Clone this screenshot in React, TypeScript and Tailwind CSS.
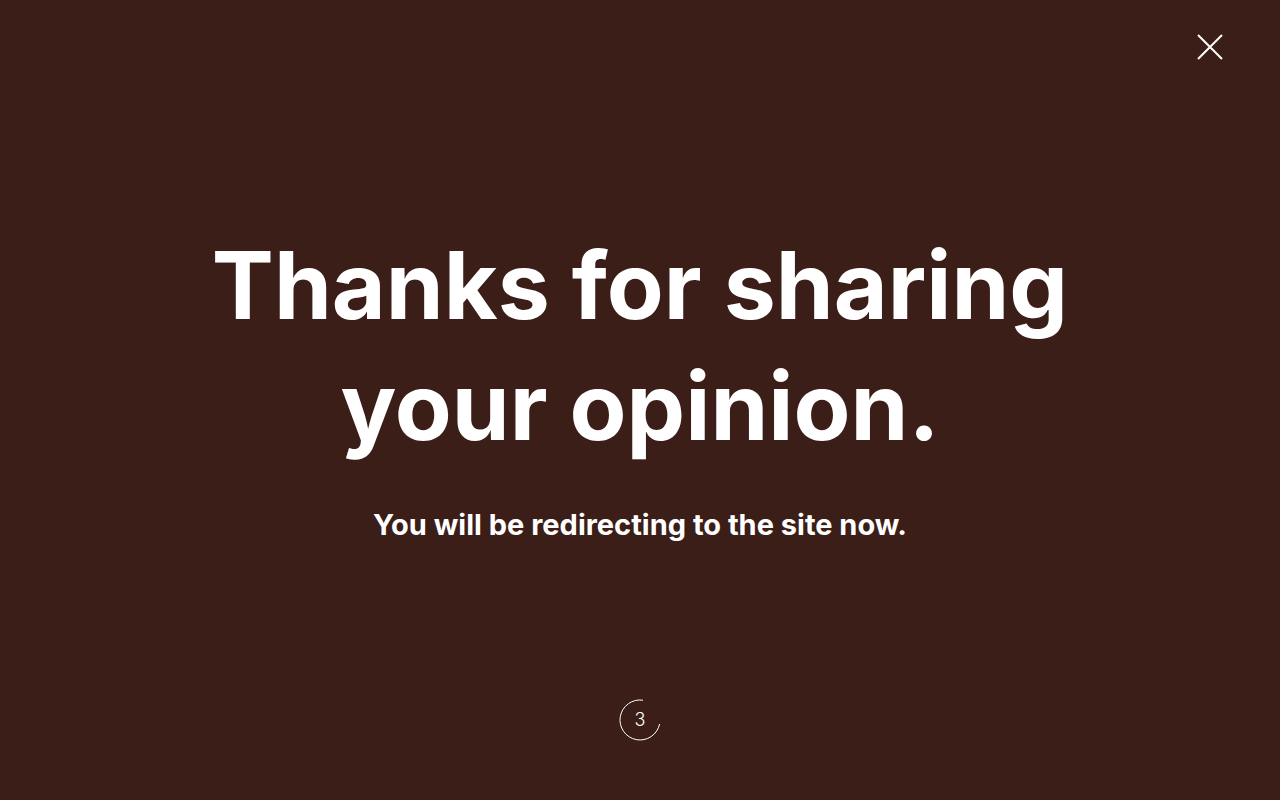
export default function App() {
  return (
    <div className="relative flex h-[800px] w-[1280px] flex-col items-center bg-[#3b1e17] text-white" style={{ fontFamily: 'Inter, "Noto Sans", sans-serif' }}>
      <button className="absolute right-[56px] top-[33px] h-[28px] w-[28px]" aria-label="Close">
        <svg viewBox="0 0 28 28" className="h-[28px] w-[28px]" fill="none" stroke="white" strokeWidth="2">
          <path d="M2 2 L26 26 M26 2 L2 26" />
        </svg>
      </button>

      <h1 className="mt-[225px] text-center text-[93px] font-bold leading-[121px]">
        Thanks for sharing
        <br />
        your opinion.
      </h1>

      <p className="mt-[41px] text-[29px] font-bold leading-[34px]">
        You will be redirecting to the site now.
      </p>

      <div className="relative mt-[156px] flex h-[44px] w-[44px] items-center justify-center">
        <svg viewBox="0 0 44 44" className="absolute inset-0 h-[44px] w-[44px]" fill="none" stroke="white" strokeWidth="1">
          <path d="M25 2.2 A20 20 0 1 0 41.6 26" />
        </svg>
        <span className="text-[18px] font-light leading-none">3</span>
      </div>
    </div>
  );
}
